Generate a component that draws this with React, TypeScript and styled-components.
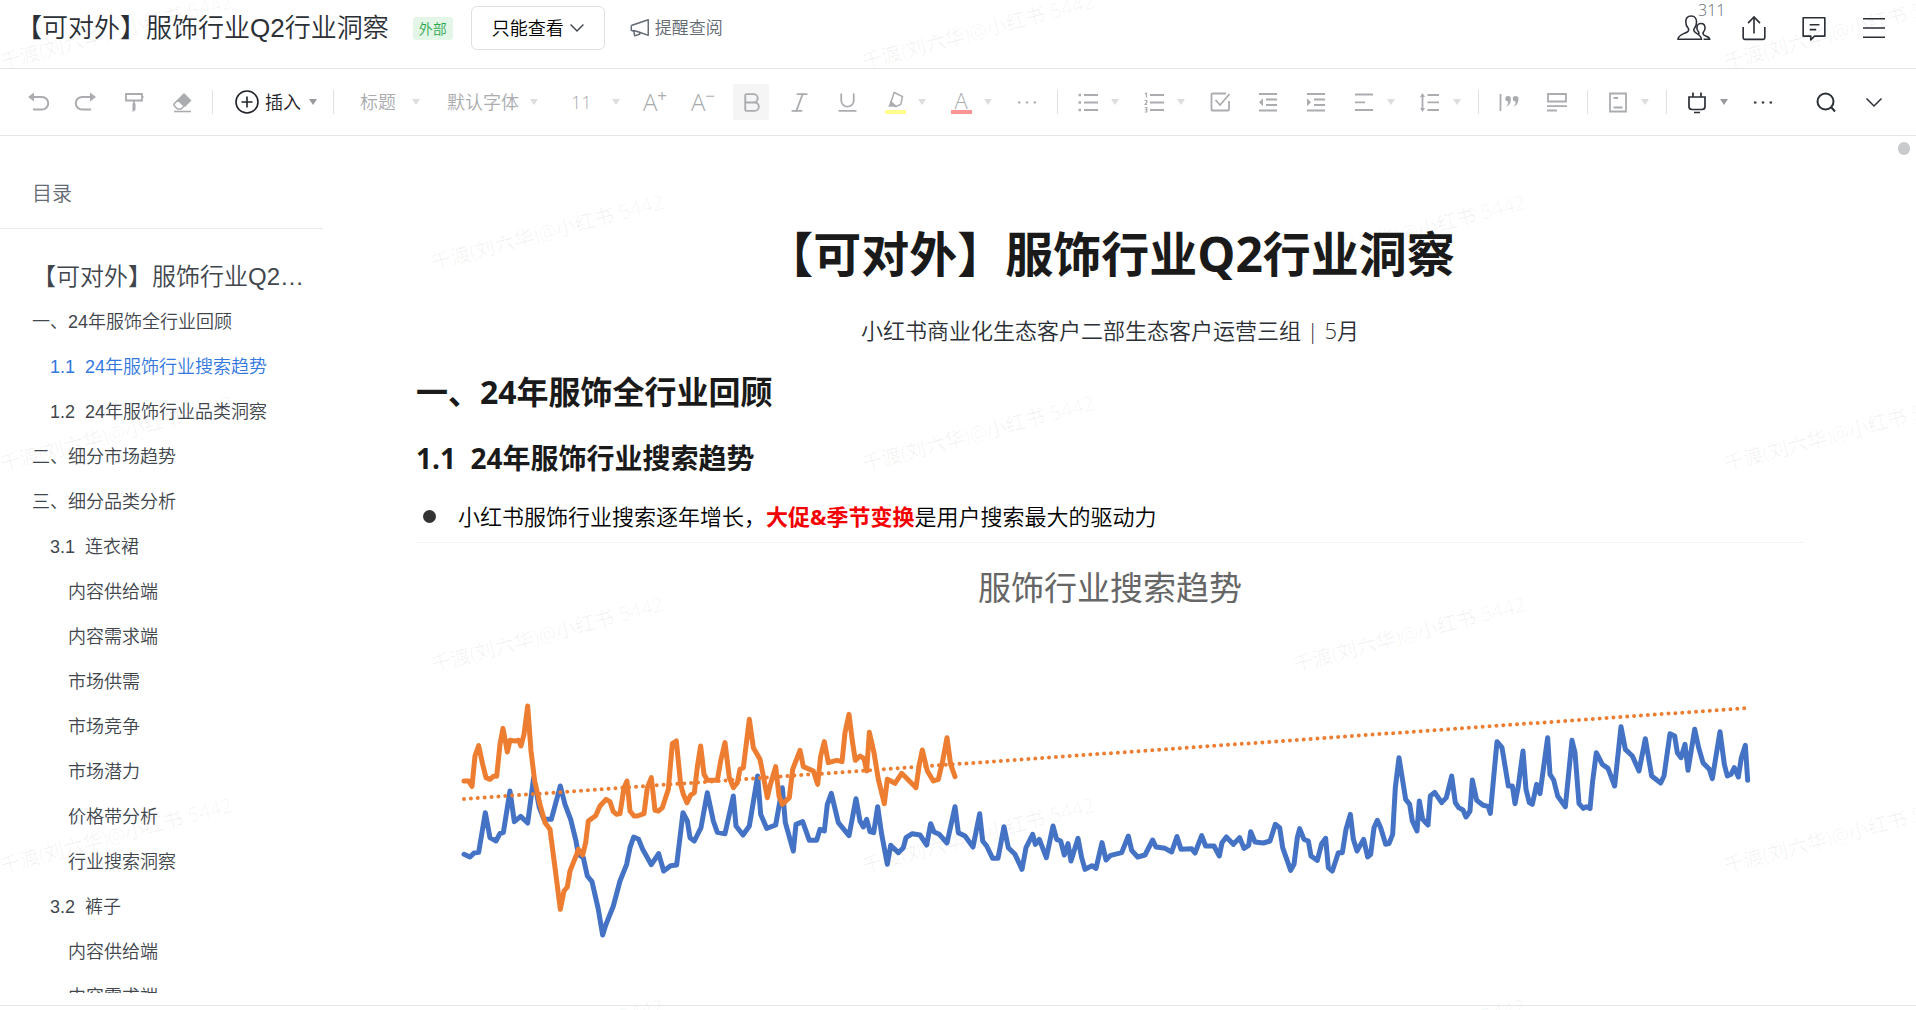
import React from "react";
import styled, { createGlobalStyle } from "styled-components";
import { Bold, Italic, Underline } from "lucide-react";

const uiFont = '"Open Sans", "Noto Sans CJK SC", sans-serif';
const outlineFont = '"Liberation Sans", "Noto Sans CJK SC", sans-serif';

const GlobalStyle = createGlobalStyle`
  * { box-sizing: border-box; }
  body { margin: 0; background: #fff; color: #1f2329; font-family: ${uiFont}; font-weight: 350; }
  h1, h2, h3, p, ul, figure { margin: 0; padding: 0; }
  ul { list-style: none; }
  button, select { font: inherit; color: inherit; border: 0; margin: 0; padding: 0; background: none; }
`;

const Page = styled.div`
  position: relative;
  display: flex;
  flex-direction: column;
  height: 100vh;
  overflow: hidden;
`;

/* ---------- Top bar ---------- */

const TopBar = styled.header`
  display: flex;
  align-items: center;
  flex: none;
  height: 69px;
  padding: 0 24px 12px 16px;
  border-bottom: 1px solid #e4e5e7;
`;

const FileName = styled.div`
  font-family: ${outlineFont};
  font-size: 26px;
  line-height: 36px;
  color: #2b2f36;
  white-space: nowrap;
`;

const Badge = styled.span`
  margin-left: 24px;
  padding: 0 6px;
  border-radius: 3px;
  background: #e4f6e8;
  color: #2ea84f;
  font-size: 14px;
  line-height: 23px;
`;

const AccessSelect = styled.label`
  display: flex;
  align-items: center;
  width: 134px;
  height: 44px;
  margin: 0 24px 0 18px;
  padding: 0 20px;
  border: 1px solid #dee0e3;
  border-radius: 6px;
  font-size: 18px;
  color: #000;
`;

const Picker = styled.select`
  flex: 1;
  min-width: 0;
  appearance: none;
  line-height: 28px;
`;

const RemindButton = styled.button`
  display: flex;
  align-items: center;
  gap: 4px;
  font-size: 17px;
  line-height: 24px;
  color: #646a73;
`;

const TopActions = styled.div`
  display: flex;
  gap: 24px;
  margin-left: auto;
`;

const TopButton = styled.button`
  position: relative;
  display: flex;
  align-items: center;
  justify-content: center;
  width: 36px;
  height: 36px;
  color: #2b2f36;
`;

const Count = styled.span`
  position: absolute;
  left: 22px;
  bottom: 25px;
  font-size: 16px;
  line-height: 22px;
  color: #646a73;
`;

/* ---------- Toolbar ---------- */

const ToolBar = styled.div`
  display: flex;
  align-items: center;
  gap: 12px;
  flex: none;
  height: 67px;
  padding: 0 24px 0 20px;
  border-bottom: 1px solid #e4e5e7;
  color: #aaacaf;
`;

const ToolGroup = styled.div`
  display: flex;
  align-items: center;
`;

const ToolButton = styled.button<{ $active?: boolean; $dark?: boolean }>`
  display: flex;
  align-items: center;
  justify-content: center;
  width: 36px;
  height: 36px;
  border-radius: 2px;
  background: ${(p) => (p.$active ? "#f5f5f5" : "transparent")};
  color: ${(p) => (p.$dark ? "#2b2f36" : "inherit")};
`;

const CaretButton = styled.button<{ $dark?: boolean }>`
  display: flex;
  align-items: center;
  justify-content: center;
  width: 18px;
  height: 36px;
  color: ${(p) => (p.$dark ? "#97999c" : "#dcdddf")};
`;

const CaretShape = styled.i`
  border: 4px solid transparent;
  border-top: 6px solid currentColor;
  border-bottom: 0;
`;

const Divider = styled.i`
  flex: none;
  width: 1px;
  height: 24px;
  background: #dee0e3;
`;

const InsertButton = styled.button`
  display: flex;
  align-items: center;
  gap: 6px;
  padding-left: 10px;
  font-size: 18px;
  line-height: 28px;
  color: #1f2329;
`;

const CaretTone = styled.span`
  display: flex;
  padding: 0 4px 0 2px;
  color: #97999c;
`;

const ToolSelect = styled.label<{ $width: number; $indent: number }>`
  display: flex;
  align-items: center;
  width: ${(p) => p.$width}px;
  padding-left: ${(p) => p.$indent}px;
  padding-right: 5px;
  font-size: 18px;
  color: #aaacaf;

  ${CaretShape} { color: #dcdddf; }
`;

const Letter = styled.span`
  display: flex;
  font-size: 24px;
  font-weight: 300;
  line-height: 24px;

  sup { font-size: 17px; font-weight: 400; line-height: 12px; }
`;

const Swatch = styled.span<{ $color: string }>`
  display: flex;
  flex-direction: column;
  align-items: center;
  width: 21px;
  border-bottom: 4px solid ${(p) => p.$color};
  font-size: 22px;
  font-weight: 300;
  line-height: 20px;
`;

const ToolEnd = styled.div`
  display: flex;
  gap: 12px;
  margin-left: auto;
`;

/* ---------- Body ---------- */

const Body = styled.div`
  display: flex;
  flex: 1;
  min-height: 0;
`;

const Sidebar = styled.nav`
  display: flex;
  flex-direction: column;
  flex: none;
  width: 323px;
  padding-bottom: 12px;
  font-family: ${outlineFont};
`;

const SidebarHead = styled.div`
  flex: none;
  padding: 43px 32px 19px;
  border-bottom: 1px solid #e8e9eb;
  font-size: 20px;
  line-height: 30px;
  color: #646a73;
`;

const OutlineList = styled.ul`
  flex: 1;
  min-height: 0;
  padding-top: 25px;
  overflow: hidden;
`;

const OutlineLink = styled.a<{ $level: number; $current?: boolean }>`
  display: block;
  padding-left: ${(p) => 32 + p.$level * 18}px;
  padding-right: 16px;
  overflow: hidden;
  text-overflow: ellipsis;
  white-space: pre;
  text-decoration: none;
  font-size: 18px;
  line-height: 45px;
  color: ${(p) => (p.$current ? "#3377e0" : "#41464d")};
`;

const OutlineTitle = styled(OutlineLink)`
  font-size: 24px;
  line-height: 46px;
`;

const DocPane = styled.main`
  position: relative;
  flex: 1;
  min-width: 0;
  padding: 83px 112px 0 93px;
  overflow: hidden;
`;

const DocTitle = styled.h1`
  text-align: center;
  font-size: 48px;
  line-height: 70px;
  color: #1a1a1a;
`;

const Byline = styled.p`
  padding-top: 24px;
  text-align: center;
  font-size: 22px;
  line-height: 34px;
  color: #2b2f36;
`;

const Heading = styled.h2`
  padding-top: 22px;
  font-size: 32px;
  line-height: 46px;
  color: #1a1a1a;
`;

const SubHeading = styled.h3`
  padding-top: 22px;
  font-size: 28px;
  line-height: 42px;
  white-space: pre;
  color: #1a1a1a;
`;

const BulletItem = styled.li`
  display: flex;
  align-items: center;
  gap: 22px;
  padding: 20px 0 9px 7px;
  border-bottom: 1px solid #f2f3f5;
  font-size: 22px;
  line-height: 34px;
  color: #000;

  &::before {
    content: "";
    width: 13px;
    height: 13px;
    border-radius: 50%;
    background: #333;
  }

  strong { font-weight: 700; color: #f50000; }
`;

const Figure = styled.figure`
  display: flex;
  flex-direction: column;

  svg { width: 100%; }
`;

const Caption = styled.figcaption`
  padding: 20px 0 48px;
  text-align: center;
  font-size: 33px;
  font-weight: 400;
  line-height: 50px;
  color: #666;
`;

const ScrollThumb = styled.i`
  position: absolute;
  top: 6px;
  right: 6px;
  width: 12px;
  height: 13px;
  border-radius: 6px;
  background: #c9cacc;
`;

const Footer = styled.footer`
  flex: none;
  height: 5px;
  border-top: 1px solid #e4e5e7;
`;

const WatermarkLayer = styled.div`
  position: absolute;
  inset: 0;
  overflow: hidden;
  pointer-events: none;
`;

const Mark = styled.span<{ $col: number; $row: number }>`
  position: absolute;
  left: ${(p) => p.$col * 431 + 4}px;
  top: ${(p) => p.$row * 201 + 49}px;
  transform: rotate(-15deg);
  transform-origin: left bottom;
  white-space: nowrap;
  font-size: 20px;
  line-height: 26px;
  color: rgba(0, 0, 0, 0.06);
`;

/* ---------- Icons ---------- */

type IconProps = { children: React.ReactNode; size?: number; weight?: number };

const Icon = ({ children, size = 24, weight = 2 }: IconProps) => (
  <svg width={size} height={size} viewBox="0 0 24 24" fill="none" stroke="currentColor" strokeWidth={weight} aria-hidden="true">
    {children}
  </svg>
);

const Caret = ({ label, dark }: { label: string; dark?: boolean }) => (
  <CaretButton aria-label={label} $dark={dark}>
    <CaretShape />
  </CaretButton>
);

type ToolProps = { label: string; children: React.ReactNode; menu?: boolean; active?: boolean; dark?: boolean };

const Tool = ({ label, children, menu, active, dark }: ToolProps) => (
  <ToolGroup>
    <ToolButton aria-label={label} $active={active} $dark={dark}>
      {children}
    </ToolButton>
    {menu && <Caret label={`${label}选项`} dark={dark} />}
  </ToolGroup>
);

const Dots = () => (
  <Icon>
    <path d="M3 12.5h2.4M10.8 12.5h2.4M18.6 12.5h2.4" />
  </Icon>
);

/* ---------- Data ---------- */

const outline = [
  { level: 0, text: "一、24年服饰全行业回顾" },
  { level: 1, text: "1.1  24年服饰行业搜索趋势", current: true },
  { level: 1, text: "1.2  24年服饰行业品类洞察" },
  { level: 0, text: "二、细分市场趋势" },
  { level: 0, text: "三、细分品类分析" },
  { level: 1, text: "3.1  连衣裙" },
  { level: 2, text: "内容供给端" },
  { level: 2, text: "内容需求端" },
  { level: 2, text: "市场供需" },
  { level: 2, text: "市场竞争" },
  { level: 2, text: "市场潜力" },
  { level: 2, text: "价格带分析" },
  { level: 2, text: "行业搜索洞察" },
  { level: 1, text: "3.2  裤子" },
  { level: 2, text: "内容供给端" },
  { level: 2, text: "内容需求端" },
];

const marks = [0, 1, 2, 3, 4, 5].flatMap((row) =>
  (row % 2 ? [1, 3] : [0, 2, 4]).map((col) => ({ row, col }))
);

const blueLine = `42,580 60,588 72,576 86,574 106,455 120,530 138,540 150,517 160,515 180,390 193,482 212,466 233,486 251,350
268,440 282,475 304,475 331,375 345,430 362,475 378,540 385,580 400,590 412,645 426,662 445,745 458,822 468,790 490,735
510,660 530,610 540,560 551,528 566,535 578,565 604,611 626,578 641,630 662,614 680,612 699,455 712,480 720,530 733,540
753,500 772,395 790,480 802,514 825,518 850,405 858,495 879,522 898,495 923,345 932,460 950,502 977,492 997,380 1006,485
1030,570 1038,490 1058,482 1078,538 1100,538 1110,505 1123,510 1132,430 1144,397 1165,485 1197,524 1218,413 1230,480
1240,498 1250,475 1260,512 1271,515 1283,437 1295,520 1312,610 1322,553 1345,575 1360,560 1368,530 1387,518 1410,522
1430,552 1442,488 1452,513 1468,520 1491,546 1515,437 1525,515 1545,525 1569,558 1589,458 1598,540 1610,555 1628,592
1644,592 1662,497 1675,560 1695,580 1716,625 1728,560 1748,520 1756,550 1768,535 1789,590 1809,495 1820,535 1832,540
1843,582 1854,548 1863,600 1884,532 1895,590 1905,625 1926,614 1938,622 1956,545 1968,597 1982,583 2015,575 2035,525
2045,568 2063,588 2085,582 2108,537 2118,558 2145,562 2165,573 2181,527 2193,565 2225,563 2235,576 2255,524 2267,555
2292,555 2308,585 2316,545 2329,528 2350,550 2369,530 2382,562 2396,553 2402,512 2415,543 2440,546 2460,540 2476,490
2489,500 2498,560 2522,628 2532,610 2542,530 2549,503 2562,535 2575,540 2583,585 2602,598 2615,548 2627,532 2635,620
2647,630 2665,575 2677,575 2688,505 2701,460 2710,535 2721,570 2741,535 2753,588 2762,580 2772,500 2782,478 2792,500
2807,550 2817,548 2828,520 2836,380 2847,290 2867,415 2879,430 2887,480 2901,510 2908,420 2918,475 2934,492 2941,405
2954,394 2975,425 2989,410 3005,345 3016,425 3026,440 3039,447 3048,468 3060,450 3067,357 3080,418 3098,432 3115,437
3121,457 3141,242 3156,260 3175,375 3187,375 3195,428 3205,375 3219,270 3228,385 3238,425 3247,430 3260,370 3270,398
3293,230 3300,340 3311,357 3323,405 3346,437 3366,238 3375,275 3387,428 3400,442 3409,437 3420,443 3428,360 3439,275
3457,310 3474,322 3494,375 3513,197 3526,265 3547,285 3567,330 3586,233 3605,345 3632,366 3642,345 3660,218 3674,225
3682,275 3693,290 3705,250 3714,328 3734,205 3746,260 3759,305 3778,325 3787,353 3810,212 3823,310 3832,345 3843,340
3853,320 3865,348 3874,290 3886,253 3893,358`;

const orangeLine = `42,360 56,360 66,376 75,285 86,254 98,310 108,350 120,355 130,346 140,346 150,250 159,202 172,273 180,238
195,240 206,238 213,255 222,220 233,135 243,270 254,360 270,430 285,485 300,505 315,620 331,745 342,690 352,678 360,630
380,580 385,565 398,582 407,545 415,480 437,464 450,435 468,415 480,422 490,452 500,460 510,458 522,380 531,360 540,450
552,465 562,465 582,458 592,380 604,350 615,448 625,450 637,440 655,385 667,248 679,240 692,370 700,400 711,425 722,402
733,395 743,310 752,255 762,340 772,358 802,358 812,300 825,245 838,350 850,380 862,365 870,325 880,320 898,175 910,260
930,295 940,345 952,410 960,375 977,317 987,405 997,430 1018,410 1028,325 1050,268 1060,317 1090,330 1103,370 1112,285
1123,242 1135,305 1160,298 1176,302 1185,215 1197,160 1207,240 1216,298 1230,285 1242,293 1250,330 1258,214 1272,275
1285,355 1303,428 1312,355 1335,367 1355,337 1370,352 1398,380 1408,310 1417,267 1432,330 1450,360 1465,355 1478,300
1491,230 1502,310 1515,347`;

const TrendChart = () => (
  <svg viewBox="-102 0 4164 900" fill="none" strokeLinecap="round" strokeLinejoin="round" role="img" aria-label="服饰行业搜索趋势">
    <polyline points={blueLine} stroke="#4472c4" strokeWidth="15" />
    <polyline points={orangeLine} stroke="#ed7d31" strokeWidth="15" />
    <line x1="42" y1="414" x2="3893" y2="141" stroke="#ed7d31" strokeWidth="12" strokeDasharray="0 20.7" />
  </svg>
);

/* ---------- App ---------- */

export default function App() {
  return (
    <Page>
      <GlobalStyle />
      <TopBar>
        <FileName>【可对外】服饰行业Q2行业洞察</FileName>
        <Badge>外部</Badge>
        <AccessSelect>
          <Picker aria-label="权限">
            <option>只能查看</option>
          </Picker>
          <Icon size={14}>
            <path d="M1 6l11 11L23 6" strokeWidth="2.4" stroke="#41464d" />
          </Icon>
        </AccessSelect>
        <RemindButton>
          <Icon size={22} weight={1.6}>
            <path d="M2.5 9.3L21 3v17l-9.500-3.400M2.5 9.3v5.200l2.700 1M5.200 14.800l1 5.700 5.300-1.500v-2.400z" strokeLinejoin="round" />
          </Icon>
          提醒查阅
        </RemindButton>
        <TopActions>
          <TopButton aria-label="协作者">
            <Icon size={34} weight={1.1}>
              <path d="M10 3.5c-2.500 0-3.800 1.900-3.800 4.200 0 2.200.8 3.500 1.700 4.500.7 1 .3 2-.7 2.600C4.500 16.300.7 17 .7 20h16.600c0-2.400-2-3.400-4.200-4.800-1.300-.8-1.600-2-.8-3 1-1.200 1.500-2.400 1.500-4.500 0-2.300-1.300-4.200-3.800-4.200z" />
              <path d="M14.600 9.800c.6-.8 1.400-1 2.200-1 1.900 0 3 1.400 3 3.200 0 1.500-.6 2.300-1.200 3-.5.800-.2 1.500.5 2 1.600 1 4 1.200 4 3h-4.300M14.500 9.800c-.7 1.800-.2 4 .8 5 .6.9.2 1.300-.3 1.700" />
            </Icon>
            <Count>311</Count>
          </TopButton>
          <TopButton aria-label="分享">
            <Icon size={26} weight={1.5}>
              <path d="M2 11v10a1.500 1.500 0 0 0 1.500 1.500h17A1.500 1.500 0 0 0 22 21V11M12 17V2M6.500 7.500L12 1.800l5.500 5.700" />
            </Icon>
          </TopButton>
          <TopButton aria-label="评论">
            <Icon size={26} weight={1.5}>
              <path d="M2 2.500h20v17H12.500L9 23v-3.500H2zM8 9h9M8 13.500h6" strokeLinejoin="round" />
            </Icon>
          </TopButton>
          <TopButton aria-label="菜单">
            <Icon weight={1.6}>
              <path d="M1 2.800h22M1 12h22M1 21.200h22" />
            </Icon>
          </TopButton>
        </TopActions>
      </TopBar>

      <ToolBar role="toolbar" aria-label="编辑工具">
        <Tool label="撤销">
          <Icon>
            <path d="M5 7h11a6 6 0 0 1 0 12.500H7" />
            <path d="M2 7l6-4.500v9z" fill="currentColor" stroke="none" />
          </Icon>
        </Tool>
        <Tool label="重做">
          <Icon>
            <path d="M19 7H8a6 6 0 0 0 0 12.500h9" />
            <path d="M22 7l-6-4.500v9z" fill="currentColor" stroke="none" />
          </Icon>
        </Tool>
        <Tool label="格式刷">
          <Icon weight={1.8}>
            <path d="M4 4h16v6.500H4zM20 7h1.500M12 10.500V15" />
            <path d="M10.500 13.500h3V20l-3 2z" fill="currentColor" stroke="none" />
          </Icon>
        </Tool>
        <Tool label="清除格式">
          <Icon weight={1.6}>
            <path d="M4 14l4-4 6 6-3 3H7.500L4 15.500z" />
            <path d="M7.500 9.500L14 3l7.500 7.500L15 17z" fill="currentColor" stroke="none" />
            <path d="M4 21.500h17" />
          </Icon>
        </Tool>
        <Divider />
        <InsertButton>
          <Icon weight={1.6}>
            <circle cx="12" cy="12" r="11" />
            <path d="M12 6.500v11M6.500 12h11" />
          </Icon>
          插入
          <CaretTone>
            <CaretShape />
          </CaretTone>
        </InsertButton>
        <Divider />
        <ToolSelect $width={79} $indent={14}>
          <Picker aria-label="段落样式">
            <option>标题</option>
          </Picker>
          <CaretShape />
        </ToolSelect>
        <ToolSelect $width={106} $indent={10}>
          <Picker aria-label="字体">
            <option>默认字体</option>
          </Picker>
          <CaretShape />
        </ToolSelect>
        <ToolSelect $width={70} $indent={16}>
          <Picker aria-label="字号">
            <option>11</option>
          </Picker>
          <CaretShape />
        </ToolSelect>
        <Tool label="增大字号">
          <Letter>A<sup>+</sup></Letter>
        </Tool>
        <Tool label="减小字号">
          <Letter>A<sup>−</sup></Letter>
        </Tool>
        <Tool label="加粗" active>
          <Bold size={25} strokeWidth={1.8} />
        </Tool>
        <Tool label="斜体">
          <Italic size={25} strokeWidth={1.7} />
        </Tool>
        <Tool label="下划线">
          <Underline size={25} strokeWidth={1.7} />
        </Tool>
        <Tool label="高亮" menu>
          <Swatch $color="#ffff8c">
            <Icon size={20} weight={1.8}>
              <path d="M11 3l10 5-2 9-6 3-6-5z" />
              <path d="M7 13l8 7H4z" fill="currentColor" stroke="none" />
            </Icon>
          </Swatch>
        </Tool>
        <Tool label="字体颜色" menu>
          <Swatch $color="#ff9494">A</Swatch>
        </Tool>
        <Tool label="更多格式">
          <Dots />
        </Tool>
        <Divider />
        <Tool label="无序列表" menu>
          <Icon weight={1.8}>
            <path d="M8 5h14M8 12.500h14M8 20h14" />
            <path d="M2.500 5H5M2.500 12.500H5M2.500 20H5" strokeWidth="2.600" />
          </Icon>
        </Tool>
        <Tool label="有序列表" menu>
          <Icon weight={1.8}>
            <path d="M8 5h14M8 12.500h14M8 20h14" />
            <path d="M3 4l1.500-.8V7.500M2.800 10.500h2v1.500l-1.600 2.300h2M2.800 17.500h2v4.500h-2M3.200 19.700h1.500" strokeWidth="1.200" />
          </Icon>
        </Tool>
        <Tool label="任务">
          <Icon weight={1.8}>
            <path d="M18 3.500H4.500a1 1 0 0 0-1 1v15a1 1 0 0 0 1 1h15.500a1 1 0 0 0 1-1V11M7.500 10l4.500 5 9.500-11" />
          </Icon>
        </Tool>
        <Tool label="减少缩进">
          <Icon weight={1.8}>
            <path d="M3 4h18M10 9.500h11M10 15h11M3 20.500h18" />
            <path d="M3 12.200l4-4v8z" fill="currentColor" stroke="none" />
          </Icon>
        </Tool>
        <Tool label="增加缩进">
          <Icon weight={1.8}>
            <path d="M3 4h18M10 9.500h11M10 15h11M3 20.500h18" />
            <path d="M7 12.200l-4-4v8z" fill="currentColor" stroke="none" />
          </Icon>
        </Tool>
        <Tool label="对齐" menu>
          <Icon weight={1.8}>
            <path d="M3 4.500h18M3 12.300h10M3 20h18" />
          </Icon>
        </Tool>
        <Tool label="行距" menu>
          <Icon weight={1.8}>
            <path d="M9.500 5H21M9.500 12.300H21M9.500 20H21M4.500 6v13" />
            <path d="M4.500 3L7 7H2zM4.500 22L7 18H2z" fill="currentColor" stroke="none" />
          </Icon>
        </Tool>
        <Divider />
        <Tool label="引用">
          <Icon>
            <path d="M3.500 4v17" strokeWidth="1.800" />
            <path d="M11 6a2.700 2.700 0 1 0 0 5.400c.4 2-.6 4-2.200 5.400 3.600-1.200 5.300-4.600 5.100-8.100A2.800 2.800 0 0 0 11 6zM18.500 6a2.700 2.700 0 1 0 0 5.400c.4 2-.6 4-2.200 5.400 3.600-1.200 5.300-4.600 5.100-8.100A2.800 2.800 0 0 0 18.500 6z" fill="currentColor" stroke="none" />
          </Icon>
        </Tool>
        <Tool label="分隔">
          <Icon weight={1.8}>
            <path d="M3 4h18v7.500H3zM2 16.200h20M2 20.500h10" />
          </Icon>
        </Tool>
        <Divider />
        <Tool label="卡片" menu>
          <Icon weight={1.8}>
            <path d="M4 3.500h16v18H4zM7.500 8H12M7.500 17.500h9" />
          </Icon>
        </Tool>
        <Divider />
        <Tool label="插件" menu dark>
          <Icon weight={1.7}>
            <path d="M4 7h16v9.500a3 3 0 0 1-3 3H7a3 3 0 0 1-3-3zM8 7V2.500M16 7V2.500M9 22.500h6" />
          </Icon>
        </Tool>
        <Tool label="更多" dark>
          <Dots />
        </Tool>
        <ToolEnd>
          <Tool label="搜索" dark>
            <Icon>
              <circle cx="11.500" cy="11.500" r="8" />
              <path d="M17 17l4 4.500" />
            </Icon>
          </Tool>
          <Tool label="收起工具栏" dark>
            <Icon weight={1.5}>
              <path d="M4.500 8.500L12 16l7.500-7.500" />
            </Icon>
          </Tool>
        </ToolEnd>
      </ToolBar>

      <Body>
        <Sidebar aria-label="目录">
          <SidebarHead>目录</SidebarHead>
          <OutlineList>
            <li>
              <OutlineTitle href="#title" $level={0}>【可对外】服饰行业Q2行业洞察</OutlineTitle>
            </li>
            {outline.map((item, i) => (
              <li key={i}>
                <OutlineLink href={`#section-${i}`} $level={item.level} $current={item.current}>
                  {item.text}
                </OutlineLink>
              </li>
            ))}
          </OutlineList>
        </Sidebar>
        <DocPane>
          <DocTitle id="title">【可对外】服饰行业Q2行业洞察</DocTitle>
          <Byline>小红书商业化生态客户二部生态客户运营三组 | 5月</Byline>
          <Heading id="section-0">一、24年服饰全行业回顾</Heading>
          <SubHeading id="section-1">{"1.1  24年服饰行业搜索趋势"}</SubHeading>
          <ul>
            <BulletItem>
              <p>
                小红书服饰行业搜索逐年增长，<strong>大促&amp;季节变换</strong>是用户搜索最大的驱动力
              </p>
            </BulletItem>
          </ul>
          <Figure>
            <Caption>服饰行业搜索趋势</Caption>
            <TrendChart />
          </Figure>
          <ScrollThumb />
        </DocPane>
      </Body>
      <Footer />

      <WatermarkLayer aria-hidden="true">
        {marks.map((m) => (
          <Mark key={`${m.row}-${m.col}`} $row={m.row} $col={m.col}>
            千渡(刘六华)@小红书 5442
          </Mark>
        ))}
      </WatermarkLayer>
    </Page>
  );
}
